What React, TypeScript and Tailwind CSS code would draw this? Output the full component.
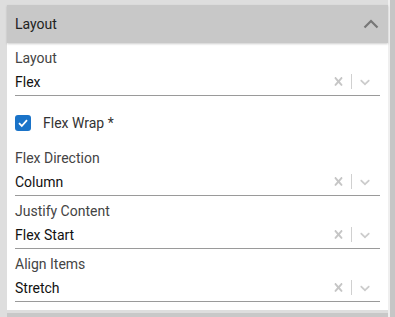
import React from "react";

function Cross() {
  return (
    <svg width="17" height="17" viewBox="0 0 20 20" className="fill-[#c6c6c6] shrink-0">
      <path d="M14.348 14.849c-0.469 0.469-1.229 0.469-1.697 0l-2.651-3.030-2.651 3.029c-0.469 0.469-1.229 0.469-1.697 0-0.469-0.469-0.469-1.229 0-1.697l2.758-3.15-2.759-3.152c-0.469-0.469-0.469-1.228 0-1.697s1.228-0.469 1.697 0l2.652 3.031 2.651-3.031c0.469-0.469 1.228-0.469 1.697 0s0.469 1.229 0 1.697l-2.758 3.152 2.758 3.15c0.469 0.469 0.469 1.229 0 1.698z" />
    </svg>
  );
}

function Chevron() {
  return (
    <svg width="16" height="16" viewBox="0 0 20 20" className="fill-[#cccccc] shrink-0">
      <path d="M4.516 7.548c0.436-0.446 1.043-0.481 1.576 0l3.908 3.747 3.908-3.747c0.533-0.481 1.141-0.446 1.574 0 0.436 0.445 0.408 1.197 0 1.615-0.406 0.418-4.695 4.502-4.695 4.502-0.217 0.223-0.502 0.335-0.787 0.335s-0.57-0.112-0.789-0.335c0 0-4.287-4.084-4.695-4.502s-0.436-1.17 0-1.615z" />
    </svg>
  );
}

function SelectField({ label, value }: { label: string; value: string }) {
  return (
    <div className="flex flex-col">
      <div className="text-[14px] leading-[20px] text-[#444444]">{label}</div>
      <div className="h-[28px] flex items-center border-b border-[#9a9a9a]">
        <div className="flex-1 text-[14px] leading-[20px] text-[#111111]">{value}</div>
        <Cross />
        <div className="w-px h-[15px] bg-[#d0d0d0] ml-[4px] mr-[5px]" />
        <Chevron />
        <div className="w-[7px]" />
      </div>
    </div>
  );
}

export default function App() {
  return (
    <div className="w-[395px] h-[317px] bg-[#dedede] flex overflow-hidden font-['Roboto',sans-serif]">
      <div className="w-[7px] shrink-0" />
      <div className="flex-1 flex flex-col pt-[5px]">
        <div className="bg-white flex flex-col">
          <div className="h-[38px] bg-[#c8c8c8] flex items-center justify-between pl-2 pr-[9px] shadow-[0_1px_2px_rgba(0,0,0,0.2)] relative">
            <span className="text-[14px] text-[#222222]">Layout</span>
            <svg width="16" height="10" viewBox="0 0 16 10" className="shrink-0">
              <polyline points="1.5,8.5 8,2 14.5,8.5" fill="none" stroke="#777777" strokeWidth="2.2" />
            </svg>
          </div>
          <div className="px-2 pt-[5px] pb-[8px] flex flex-col">
            <SelectField label="Layout" value="Flex" />
            <div className="flex items-center gap-3 pt-[17px] pb-[15px]">
              <div className="w-4 h-4 rounded-[3px] bg-[#1a73c8] flex items-center justify-center">
                <svg width="12" height="12" viewBox="0 0 12 12">
                  <polyline points="2,6.2 4.8,9 10,3.2" fill="none" stroke="white" strokeWidth="1.8" />
                </svg>
              </div>
              <span className="text-[14px] leading-[20px] text-[#333333]">Flex Wrap *</span>
            </div>
            <div className="flex flex-col gap-[5px]">
              <SelectField label="Flex Direction" value="Column" />
              <SelectField label="Justify Content" value="Flex Start" />
              <SelectField label="Align Items" value="Stretch" />
            </div>
          </div>
        </div>
        <div className="mt-[3px] h-[20px] bg-[#c8c8c8]" />
      </div>
      <div className="w-[2px] shrink-0 bg-[#efefef]" />
      <div className="w-[5px] shrink-0 bg-[#c6c6c6]" />
    </div>
  );
}
